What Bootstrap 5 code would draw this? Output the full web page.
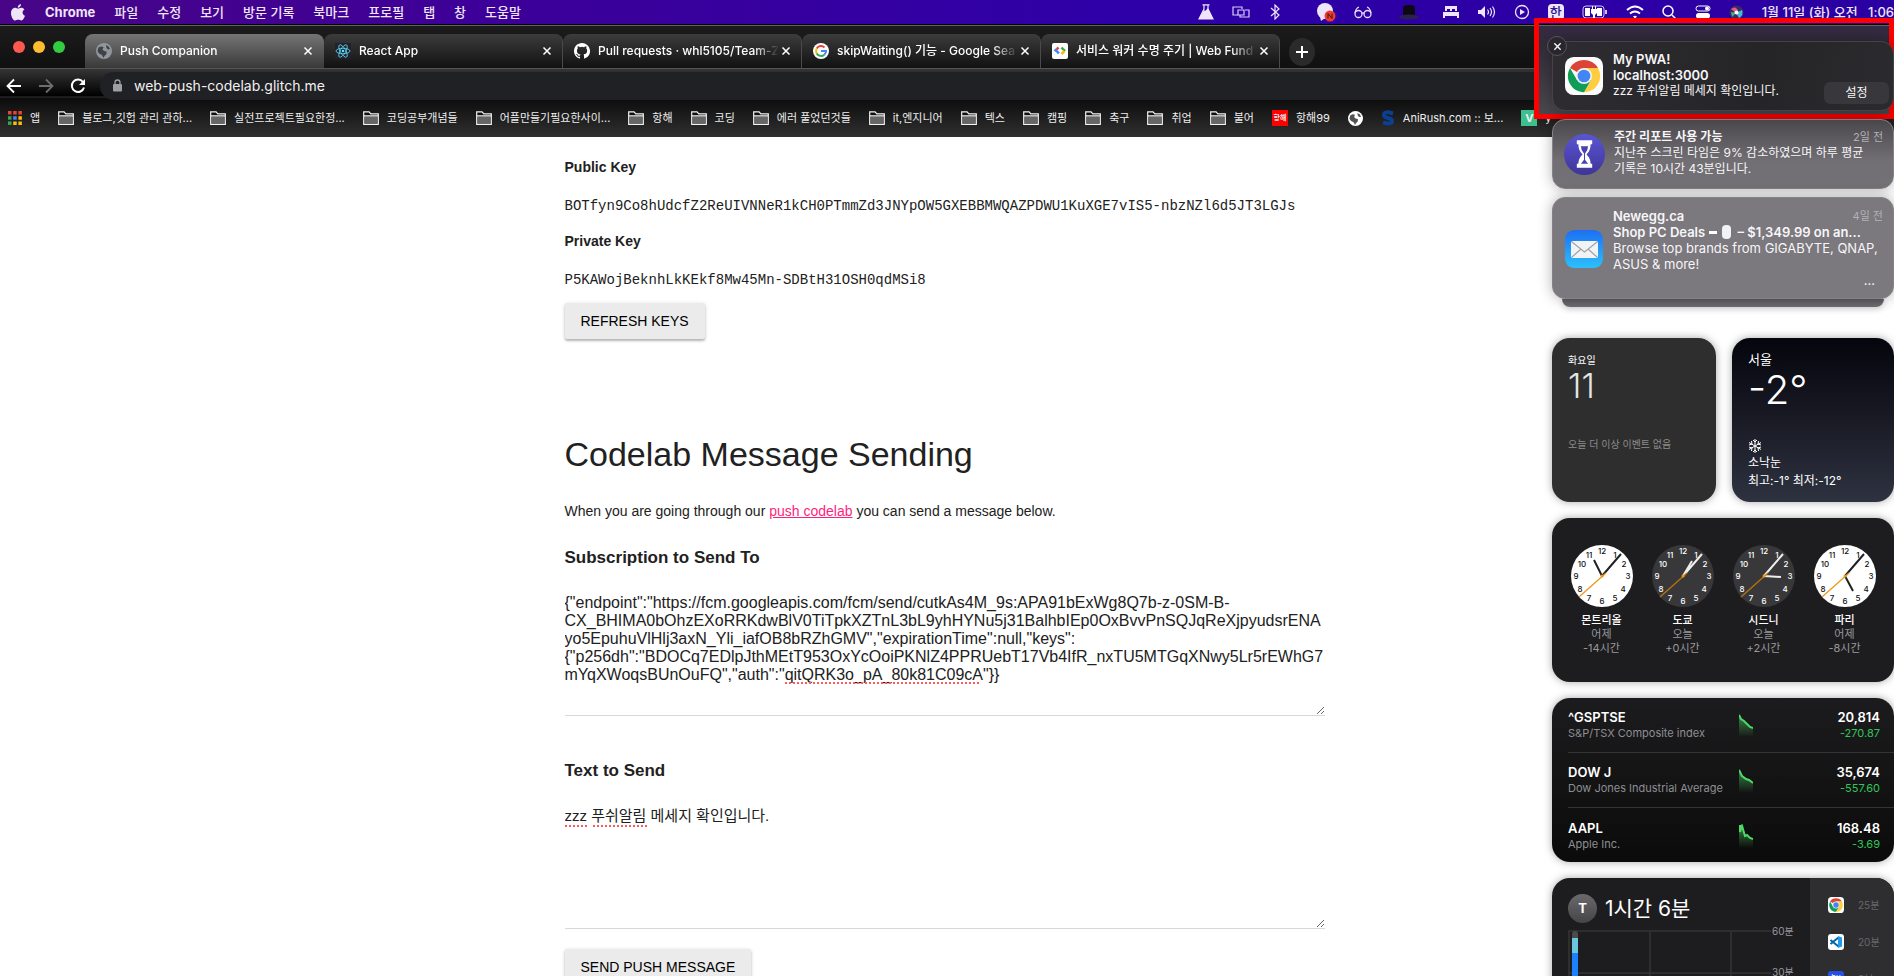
<!DOCTYPE html>
<html lang="ko">
<head>
<meta charset="utf-8">
<meta name="viewport" content="width=device-width, initial-scale=1">
<title>Push Companion</title>
<link rel="stylesheet" href="https://cdn.jsdelivr.net/npm/bootstrap@5.3.0/dist/css/bootstrap.min.css">
<style>
  body { font-family: Inter, "Noto Sans CJK KR", sans-serif; font-size: 13px; line-height: 16px; background: #fff; color: #212121; }
  .desktop { height: 100vh; }
  svg { flex: none; display: block; }
  button { font: inherit; color: inherit; }
  .plain-btn { border: 0; background: none; padding: 0; }
  .cut { overflow: hidden; white-space: nowrap; }

  /* system menu bar */
  .menubar { height: 25px; background: linear-gradient(90deg, #480587, #3d0098 25%, #2e00a8 60%, #2b00a2); border-bottom: 1px solid #000; color: #eee6f8; }
  .menubar a { color: inherit; text-decoration: none; }
  .menus { gap: 19px; padding-left: 10px; font-weight: 500; }
  .status { gap: 18px; font-weight: 500; }
  .input-lang { width: 16px; background: #eee6f8; color: #2e1494; }

  /* browser window */
  .tabstrip { height: 43px; background: linear-gradient(#1c1c1c, #101010); border-top: 1px solid #616161; color: #fff; }
  .lights { width: 85px; gap: 8px; padding-left: 13px; }
  .dot { width: 12px; height: 12px; border-radius: 50%; }
  .tab-item { width: 239px; height: 34px; padding: 0 10px 0 11px; gap: 8px; font-size: 12px; font-weight: 500; border-radius: 8px 8px 0 0; background: linear-gradient(#3c3c3c, #111); border-right: 1px solid #4a4a4a; }
  .tab-item.current { background: linear-gradient(#757575, #393939); border-right-color: transparent; }
  .tab-item .cut { margin-right: -6px; -webkit-mask-image: linear-gradient(90deg, #000 86%, transparent); mask-image: linear-gradient(90deg, #000 86%, transparent); }
  .plus { width: 26px; height: 28px; border-radius: 50%; background: #2a2a2a; margin-left: 9px; margin-bottom: 2px; }
  .chrome-bars { background: linear-gradient(#353535, #000 27px, #333 28px, #0c0c0c 29px, #303030); border-top: 1px solid #555; color: #fff; }
  .toolbar { height: 34px; padding: 0 0 1px 6px; gap: 16px; }
  .omnibox { height: 28px; border-radius: 14px; background: #202124; padding-left: 12px; gap: 11px; margin-left: -2px; }
  .omnibox input { background: none; border: 0; outline: 0; color: #f1f1f1; font-size: 14px; padding: 0; }
  .bookmarks { height: 34px; padding: 0 0 4px 8px; gap: 18px; font-size: 11px; }
  .bookmarks a { display: flex; align-items: center; gap: 8px; color: #eee; text-decoration: none; white-space: nowrap; flex: none; }
  .fav-red { width: 16px; height: 16px; background: #f00; font-size: 7px; line-height: 16px; text-align: center; font-weight: 700; }
  .fav-v { width: 16px; height: 16px; background: #3dc08d; text-align: center; font-weight: 700; }

  /* web page */
  .site { font-family: "Liberation Sans", "Noto Sans CJK KR", sans-serif; font-size: 14px; line-height: 24px; padding: 18px 5px 0 0; }
  .column { max-width: 760px; }
  .site h3 { font-size: 14px; line-height: 24px; font-weight: 700; margin: 0 0 15px; }
  .site code { display: block; color: #212121; font-family: "Liberation Mono", monospace; font-size: 14px; margin-bottom: 11px; }
  .site h4 { font-size: 34px; line-height: 40px; font-weight: 400; margin: 95px 0 25px; }
  .site p { margin: 0 0 23px; }
  .site p a { color: #ff1f7d; }
  .field-label { display: block; font-size: 17px; font-weight: 700; margin-bottom: 20px; }
  .field-box { margin-bottom: 43px; }
  .field { display: block; width: 100%; height: 126px; font-size: 16px; line-height: 18px; color: #212121; border: 0; border-bottom: 1px solid #d8d8d8; padding: 4px 0; outline: 0; overflow: hidden; word-break: break-all; }
  #message { font-size: 15px; }
  .raised { display: block; height: 36px; padding: 0 16px; border: 0; border-radius: 2px; background: #ebebeb; color: #000; box-shadow: 0 2px 2px rgba(0,0,0,.2), 0 1px 4px rgba(0,0,0,.16); }
  .send { margin-top: 20px; }
  .misspelt { position: absolute; height: 2px; background: repeating-linear-gradient(90deg, #ff5a5a 0 2px, transparent 2px 4px); }

  /* notification centre */
  .centre { position: absolute; top: 41px; right: 0; width: 342px; color: #fff; }
  .note { border-radius: 13px; border: 1px solid #858388; background: #7b787e; padding: 9px 10px 9px 12px; gap: 10px; color: #f7f6f8; box-shadow: 0 0 14px rgba(0,0,0,.3); margin-bottom: 8px; }
  .note b { font-weight: 600; }
  .ko { font-size: 12px; }
  .note-top { background: linear-gradient(100deg, #2e2c31, #252527 60%, #2b2a2e); border-color: #454349; height: 70px; position: relative; padding-right: 4px; }
  .note-mid { background: linear-gradient(#4a474d, #716e74 60%, #737076); height: 70px; padding-left: 11px; gap: 9px; }
  .note-last { height: 102px; padding-top: 10px; position: relative; margin-bottom: 0; }
  .when { color: #b4b2b7; font-size: 11px; }
  .stack { height: 8px; margin: 0 10px 31px; border-radius: 0 0 12px 12px; background: linear-gradient(#5f5d62, #706e73); box-shadow: 0 2px 6px rgba(0,0,0,.2); }
  .settings { border: 0; border-radius: 6px; background: #38373b; height: 22px; width: 65px; font-size: 12px; align-self: flex-end; margin-bottom: -3px; }
  .close-note { position: absolute; left: -6px; top: -6px; width: 20px; height: 20px; border-radius: 50%; background: #29272d; border: 1px solid #57545c; display: grid; place-items: center; }
  .widget { border-radius: 18px; background: #1d1d1f; box-shadow: 0 0 8px rgba(0,0,0,.35); height: 164px; margin-bottom: 16px; overflow: hidden; }
  .pair { gap: 16px; }
  .day { background: #2e2e2e; padding: 14px 16px; font-size: 10px; width: 164px; }
  .day-num { font-size: 34px; line-height: 36px; font-weight: 300; color: #e4e4e4; margin-bottom: 32px; }
  .muted { color: #8c8c8c; }
  .weather { background: linear-gradient(#05050d, #171822 45%, #2e3240); padding: 12px 16px; font-size: 12px; line-height: 18px; }
  .city { font-size: 13px; }
  .temp { font-size: 40px; line-height: 44px; font-weight: 300; margin-bottom: 26px; }
  .clocks { padding: 27px 9px; font-size: 11px; line-height: 14px; color: #98989d; }
  .clocks b { font-weight: 500; color: #fff; }
  .clocks svg { margin-bottom: 6px; }
  .face { font-size: 8px; font-weight: 500; text-anchor: middle; }
  .stocks { background: linear-gradient(#1c1c1e, #0b0b0b); padding-left: 16px; display: flex; flex-direction: column; }
  .stocks table { width: 100%; height: 100%; font-size: 11px; line-height: 15px; table-layout: fixed; }
  .stocks td { padding: 2px 0 0; border-bottom: 1px solid #343436; color: #8e8e93; white-space: nowrap; }
  .stocks td:first-child { width: 171px; }
  .stocks td:last-child { padding-right: 14px; text-align: right; color: #32c559; }
  .stocks tr:last-child td { border: 0; }
  .stocks b { font-size: 13px; font-weight: 600; color: #fff; }
  .usage-main { padding: 16px 0 0 16px; }
  .initial { width: 29px; height: 29px; border-radius: 50%; background: linear-gradient(#6a6a6c, #454547); font-weight: 700; line-height: 29px; text-align: center; }
  .total { font-size: 21px; line-height: 29px; }
  .usage-side { width: 84px; background: #2e2e30; padding: 19px 0 0 18px; gap: 21px; color: #68686b; font-size: 10px; }
  .usage-side div { gap: 14px; }
  .axis { fill: #98989d; font-size: 10px; }

  .highlight { position: absolute; top: 18px; right: 0; width: 360px; height: 101px; border: 5px solid #f00; background: linear-gradient(transparent 3px, #352a45 3px, #302b38 20px, #4a484e); }
</style>
</head>
<body>
<svg width="0" height="0" class="position-absolute" aria-hidden="true">
  <defs>
    <symbol id="folder" viewBox="0 0 16 14"><path d="M.7 13.3V.9h5.4l1.7 2h7.5v10.4z" fill="#111"/><path d="M1.5 5.500h13v7h-13z" fill="#666"/><path d="M.7 13.3V.9h5.4l1.7 2h7.5v10.4zM1 4.9h14" fill="none" stroke="#f4f4f4" stroke-width="1.2"/></symbol>
    <symbol id="globe" viewBox="0 0 16 16"><circle cx="8" cy="8" r="8" fill="currentColor"/><path d="M2.500 4.500 5 3.500l2.500.5-1 2.500L8 8l2.500.5v2.500L8.500 13l-1 2-1.500-3-3-1.500L1.500 8zM10 2l2.500 1.500L14 6l-2 .5L10.500 5z" fill="#333" opacity=".85"/></symbol>
    <symbol id="ex" viewBox="0 0 10 10"><path d="m1.500 1.500 7 7m0-7-7 7" stroke="currentColor" stroke-width="1.500"/></symbol>
    <symbol id="chrome" viewBox="0 0 40 40"><rect width="40" height="40" rx="9" fill="#fbfbfb"/><path d="M20 20 5.300 11.500A17 17 0 0 1 34.700 11.500L20 11.500z" fill="#db4437"/><path d="M34.700 11.500A17 17 0 0 1 20 37L27.400 24.300 20 11.500z" fill="#ffcd40"/><path d="M5.300 11.500A17 17 0 0 0 20 37L27.400 24.300 12.600 24.300z" fill="#0f9d58"/><circle cx="20" cy="20" r="8.500" fill="#f1f1f1"/><circle cx="20" cy="20" r="6.700" fill="#4285f4"/></symbol>
    <symbol id="ticks" viewBox="0 0 62 62"><circle cx="31" cy="31" r="31" fill="var(--dial)"/><g class="face" fill="currentColor"><text x="44" y="13">1</text><text x="53" y="22">2</text><text x="57" y="34">3</text><text x="52" y="47">4</text><text x="44" y="56">5</text><text x="31" y="59">6</text><text x="18" y="56">7</text><text x="9" y="47">8</text><text x="5" y="34">9</text><text x="11" y="22">10</text><text x="18" y="13">11</text><text x="31" y="9">12</text></g></symbol>
    <linearGradient id="fade" x2="0" y2="1"><stop stop-color="#4cd964" stop-opacity=".6"/><stop offset="1" stop-color="#4cd964" stop-opacity="0"/></linearGradient>
    <linearGradient id="mailbg" x2="0" y2="1"><stop stop-color="#1d6ff2"/><stop offset="1" stop-color="#2dc0fb"/></linearGradient>
    <linearGradient id="timebg" x2="0" y2="1"><stop stop-color="#5a55d6"/><stop offset="1" stop-color="#3f3596"/></linearGradient>
  </defs>
</svg>

<div class="desktop position-relative overflow-hidden">
  <header class="menubar d-flex align-items-center justify-content-between">
    <nav class="menus d-flex align-items-center" aria-label="메뉴">
      <svg width="16" height="17" viewBox="0 0 16 17" fill="#eee6f8"><path d="M11 0c.2 1.900-1.400 3.700-3.200 3.700C7.500 2 9.200.2 11 0zM8 4.600c.8 0 1.700-.9 3.300-.9 1.200 0 2.400.6 3.100 1.700-2.700 1.600-2.300 5.200.6 6.400-.6 1.900-2 4.700-3.600 4.700-1.200 0-1.600-.7-3.100-.7s-2 .7-3.100.7C3.200 16.500 1 12.700 1 9.200c0-3.300 2-5.400 4.200-5.400 1.300 0 2.100.8 2.800.8z"/></svg>
      <a href="#"><b>Chrome</b></a><a href="#">파일</a><a href="#">수정</a><a href="#">보기</a><a href="#">방문 기록</a><a href="#">북마크</a><a href="#">프로필</a><a href="#">탭</a><a href="#">창</a><a href="#">도움말</a>
    </nav>
    <div class="status d-flex align-items-center text-nowrap">
      <svg width="16" height="16" viewBox="0 0 16 16"><path d="M4.500.800h7M6 1v4L1 15h14L10 5V1" fill="none" stroke="#eee6f8" stroke-width="1.200"/><path d="m6 6 1 1 3-3 5 11H1z" fill="#eee6f8"/></svg>
      <svg width="18" height="14" viewBox="0 0 18 14" fill="none" stroke="#d9cdf5" stroke-width="1.200"><path d="M10 4V2H1v8h5M13 5h4v7H8v-2"/><path d="M6 5h6v5H6z"/></svg>
      <svg class="me-3" width="14" height="16" viewBox="0 0 14 16" fill="none" stroke="#eee6f8" stroke-width="1.200"><path d="m3 4 8 7-4 4V1l4 4-8 7"/></svg>
      <svg width="20" height="19" viewBox="0 0 20 19"><circle cx="9" cy="8" r="8" fill="#eee6f8"/><path d="m4 14 1 4 4-3" fill="#eee6f8"/><circle cx="14" cy="13" r="5.500" fill="#ee3d2d"/><path d="M12 15.500v-5l4 5v-5" fill="none" stroke="#41101b"/></svg>
      <svg class="me-2" width="18" height="14" viewBox="0 0 18 14" fill="none" stroke="#e6dcf8" stroke-width="1.300"><circle cx="4.500" cy="9" r="3.500"/><circle cx="13.500" cy="9" r="3.500"/><path d="M1 8q1-5 4-6M17 8q-1-5-4-6M8 8.500q1-1 2 0"/></svg>
      <svg class="me-1" width="22" height="16" viewBox="0 0 22 16"><path d="M5 12V4q0-3 6-3t6 3v8z" fill="#0d0910"/><ellipse cx="11" cy="13" rx="10" ry="2.500" fill="#2a2150"/></svg>
      <svg width="18" height="14" viewBox="0 0 18 14" fill="#eee6f8"><path d="M3 1h12v5h-2V4h-3v2H8V4H5v2H3zM1 7h16v6h-2v-2H3v2H1z"/></svg>
      <svg width="18" height="14" viewBox="0 0 18 14"><path d="M0 5h3l4-4v12L3 9H0z" fill="#eee6f8"/><path d="M9.500 4.500q2 2.500 0 5M12 3q3 4 0 8M14.500 1.500q4 5.500 0 11" fill="none" stroke="#eee6f8" stroke-width="1.200"/></svg>
      <svg width="16" height="16" viewBox="0 0 16 16"><circle cx="8" cy="8" r="6.500" fill="none" stroke="#eee6f8" stroke-width="1.300"/><path d="m6 5 5 3-5 3z" fill="#eee6f8"/></svg>
      <span class="input-lang rounded-1 text-center">한</span>
      <svg width="26" height="14" viewBox="0 0 26 14"><rect x="1" y="1" width="21" height="12" rx="3" fill="none" stroke="#cfc4ef"/><path d="M3 3h5v8H3zM15 3h5v8h-5zM10 1v3H9v4l2 2v3h2v-3l2-2V4h-1V1h-1v3h-2V1z" fill="#fff"/><path d="M24 5v4" stroke="#cfc4ef" stroke-width="2"/></svg>
      <svg width="18" height="14" viewBox="0 0 18 14" fill="none" stroke="#fff" stroke-width="2"><path d="M1 5q8-7 16 0M4 8.500q5-4 10 0"/><path d="m7 11.500 2 2 2-2q-2-1.500-4 0z" fill="#fff" stroke="none"/></svg>
      <svg width="15" height="15" viewBox="0 0 15 15" fill="none" stroke="#fff" stroke-width="1.500"><circle cx="6" cy="6" r="5"/><path d="m10 10 4.500 4.500"/></svg>
      <svg width="16" height="14" viewBox="0 0 16 14"><rect x="1" y="1" width="14" height="5" rx="2.500" fill="none" stroke="#fff"/><rect x="1" y="8" width="14" height="5.500" rx="2.700" fill="#fff"/><circle cx="12" cy="3.500" r="2" fill="#fff"/></svg>
      <svg width="15" height="15" viewBox="0 0 15 15"><circle cx="7.500" cy="7.500" r="7" fill="#3b2a63"/><path d="M2 4q5-4 7 2l-2 2z" fill="#e05a8a"/><path d="m7 8 6-3q2 5-3 8z" fill="#45b7e0"/><path d="m7 8-4 4-1-5z" fill="#43b58a"/><circle cx="7.500" cy="7.500" r="2" fill="#fff"/></svg>
      <span>1월 11일 (화) 오전&nbsp;&nbsp; 1:06</span>
    </div>
  </header>

  <div class="tabstrip d-flex align-items-end">
    <div class="lights d-flex align-items-center align-self-stretch">
      <span class="dot" style="background:#fe5850"></span><span class="dot" style="background:#febc2e"></span><span class="dot" style="background:#32cd41"></span>
    </div>
    <div class="tab-item current d-flex align-items-center"><svg width="16" height="16" color="#8f969e"><use href="#globe"/></svg><span class="cut flex-grow-1">Push Companion</span><button class="plain-btn" aria-label="닫기"><svg width="10" height="10"><use href="#ex"/></svg></button></div>
    <div class="tab-item d-flex align-items-center"><svg width="16" height="16" viewBox="0 0 16 16"><rect width="16" height="16" fill="#20232a"/><g fill="none" stroke="#61dafb" stroke-width=".8"><ellipse cx="8" cy="8" rx="7" ry="2.700"/><ellipse cx="8" cy="8" rx="7" ry="2.700" transform="rotate(60 8 8)"/><ellipse cx="8" cy="8" rx="7" ry="2.700" transform="rotate(120 8 8)"/></g><circle cx="8" cy="8" r="1.300" fill="#61dafb"/></svg><span class="cut flex-grow-1">React App</span><button class="plain-btn" aria-label="닫기"><svg width="10" height="10"><use href="#ex"/></svg></button></div>
    <div class="tab-item d-flex align-items-center"><svg width="16" height="16" viewBox="0 0 16 16" fill="#fff"><path d="M8 0C3.580 0 0 3.580 0 8c0 3.540 2.290 6.530 5.470 7.590.4.070.55-.17.55-.38v-1.490c-2.010.37-2.530-.49-2.690-.94-.09-.23-.48-.94-.82-1.130-.28-.15-.68-.52-.01-.53.63-.01 1.080.58 1.230.82.72 1.210 1.870.87 2.330.66.07-.52.28-.87.51-1.070-1.780-.2-3.640-.89-3.640-3.950 0-.87.31-1.590.82-2.150-.08-.2-.36-1.020.08-2.120 0 0 .67-.21 2.200.82a7.400 7.400 0 0 1 4 0c1.530-1.040 2.200-.82 2.200-.82.44 1.100.16 1.920.08 2.120.51.56.82 1.270.82 2.150 0 3.070-1.870 3.750-3.650 3.950.29.25.54.73.54 1.480v2.200c0 .21.15.46.55.38A8 8 0 0 0 8 0z"/></svg><span class="cut flex-grow-1">Pull requests · whl5105/Team-Z</span><button class="plain-btn" aria-label="닫기"><svg width="10" height="10"><use href="#ex"/></svg></button></div>
    <div class="tab-item d-flex align-items-center"><svg width="16" height="16" viewBox="0 0 16 16"><circle cx="8" cy="8" r="8" fill="#fff"/><g fill="none" stroke-width="2"><path d="M11.500 4.500A5 5 0 0 0 3.700 5.500" stroke="#ea4335"/><path d="M3.700 5.500a5 5 0 0 0 0 5" stroke="#fbbc05"/><path d="M3.700 10.500a5 5 0 0 0 7.600 1.200" stroke="#34a853"/><path d="M11.300 11.700A5 5 0 0 0 13 8H8" stroke="#4285f4"/></g></svg><span class="cut flex-grow-1">skipWaiting() 기능 - Google Sea</span><button class="plain-btn" aria-label="닫기"><svg width="10" height="10"><use href="#ex"/></svg></button></div>
    <div class="tab-item d-flex align-items-center"><svg width="16" height="16" viewBox="0 0 16 16" fill="none" stroke-width="2.500"><rect width="16" height="16" rx="2" fill="#fff"/><path d="M6.500 4.500 4.700 6.300" stroke="#ea4335"/><path d="M2.500 8.200 3.800 7l3 3.500" stroke="#4285f4"/><path d="m9.500 4.500 3.500 3.700" stroke="#34a853"/><path d="m12.500 8-3 3" stroke="#fbbc05"/></svg><span class="cut flex-grow-1">서비스 워커 수명 주기 | Web Fund</span><button class="plain-btn" aria-label="닫기"><svg width="10" height="10"><use href="#ex"/></svg></button></div>
    <button class="plain-btn plus d-grid align-items-center justify-content-center" aria-label="새 탭"><svg width="12" height="12" viewBox="0 0 12 12" stroke="#fff" stroke-width="2"><path d="M6 0v12M0 6h12"/></svg></button>
  </div>

  <div class="chrome-bars">
    <div class="toolbar d-flex align-items-center">
      <button class="plain-btn" aria-label="뒤로"><svg width="16" height="16" viewBox="0 0 16 16" fill="none" stroke="#fff" stroke-width="1.800"><path d="M15 8H2m6-6.500L1.500 8 8 14.500"/></svg></button>
      <button class="plain-btn" aria-label="앞으로"><svg width="16" height="16" viewBox="0 0 16 16" fill="none" stroke="#6d6d6d" stroke-width="1.800"><path d="M1 8h13M8 1.500 14.500 8 8 14.500"/></svg></button>
      <button class="plain-btn" aria-label="새로고침"><svg width="16" height="16" viewBox="0 0 16 16"><path d="M13 4a6.200 6.200 0 1 0 1 5.500" fill="none" stroke="#fff" stroke-width="2"/><path d="M15 1v6H9z" fill="#fff"/></svg></button>
      <div class="omnibox d-flex align-items-center flex-grow-1"><svg width="11" height="13" viewBox="0 0 11 13"><rect x="1" y="5" width="9" height="7.500" rx="1" fill="#9aa0a6"/><path d="M3 5V3.500a2.500 2.500 0 0 1 5 0V5" fill="none" stroke="#9aa0a6" stroke-width="1.300"/></svg><input class="flex-grow-1" type="text" aria-label="주소" value="web-push-codelab.glitch.me"></div>
    </div>
    <nav class="bookmarks d-flex align-items-center overflow-hidden" aria-label="북마크">
      <a href="#"><svg width="14" height="14" viewBox="0 0 14 14"><path d="M0 0h3.500v3.500H0zM5.200 0h3.500v3.500H5.200zM10.400 0h3.500v3.500h-3.500z" fill="#ea4335"/><path d="M0 5.200h3.500v3.500H0z" fill="#34a853"/><path d="M5.200 5.200h3.500v3.500H5.200z" fill="#4285f4"/><path d="M10.400 5.200h3.500v3.500h-3.500zM5.200 10.400h3.500v3.500H5.200zM10.400 10.400h3.500v3.500h-3.500z" fill="#fbbc05"/><path d="M0 10.400h3.500v3.500H0z" fill="#34a853"/></svg>앱</a>
      <a href="#"><svg width="16" height="14"><use href="#folder"/></svg>블로그,깃헙 관리 관하...</a>
      <a href="#"><svg width="16" height="14"><use href="#folder"/></svg>실전프로젝트필요한정...</a>
      <a href="#"><svg width="16" height="14"><use href="#folder"/></svg>코딩공부개념들</a>
      <a href="#"><svg width="16" height="14"><use href="#folder"/></svg>어플만들기필요한사이...</a>
      <a href="#"><svg width="16" height="14"><use href="#folder"/></svg>항해</a>
      <a href="#"><svg width="16" height="14"><use href="#folder"/></svg>코딩</a>
      <a href="#"><svg width="16" height="14"><use href="#folder"/></svg>에러 풀었던것들</a>
      <a href="#"><svg width="16" height="14"><use href="#folder"/></svg>it,엔지니어</a>
      <a href="#"><svg width="16" height="14"><use href="#folder"/></svg>텍스</a>
      <a href="#"><svg width="16" height="14"><use href="#folder"/></svg>캠핑</a>
      <a href="#"><svg width="16" height="14"><use href="#folder"/></svg>축구</a>
      <a href="#"><svg width="16" height="14"><use href="#folder"/></svg>취업</a>
      <a href="#"><svg width="16" height="14"><use href="#folder"/></svg>불어</a>
      <a href="#"><span class="fav-red">항해</span>항해99</a>
      <a href="#" aria-label="사이트"><svg width="15" height="15" color="#fff"><use href="#globe"/></svg></a>
      <a href="#"><svg width="14" height="16" viewBox="0 0 14 16" fill="none" stroke="#0b3f91" stroke-width="4"><path d="M12 3.500Q3 .5 3 5q0 2 4 3t4 3q0 4-9 1.500"/></svg>AniRush.com :: 보...</a>
      <a href="#"><span class="fav-v">V</span>y</a>
    </nav>
  </div>

  <main class="site">
    <div class="column mx-auto">
      <h3>Public Key</h3>
      <code>BOTfyn9Co8hUdcfZ2ReUIVNNeR1kCH0PTmmZd3JNYpOW5GXEBBMWQAZPDWU1KuXGE7vIS5-nbzNZl6d5JT3LGJs</code>
      <h3>Private Key</h3>
      <code>P5KAWojBeknhLkKEkf8Mw45Mn-SDBtH31OSH0qdMSi8</code>
      <button class="raised">REFRESH KEYS</button>
      <h4>Codelab Message Sending</h4>
      <p>When you are going through our <a href="#">push codelab</a> you can send a message below.</p>
      <label class="field-label" for="subscription">Subscription to Send To</label>
      <div class="field-box position-relative">
        <textarea class="field" id="subscription" spellcheck="false">{"endpoint":"https://fcm.googleapis.com/fcm/send/cutkAs4M_9s:APA91bExWg8Q7b-z-0SM-B-
CX_BHIMA0bOhzEXoRRKdwBlV0TiTpkXZTnL3bL9yhHYNu5j31BalhbIEp0OxBvvPnSQJqReXjpyudsrENA
yo5EpuhuVlHlj3axN_Yli_iafOB8bRZhGMV","expirationTime":null,"keys":
{"p256dh":"BDOCq7EDlpJthMEtT953OxYcOoiPKNlZ4PPRUebT17Vb4IfR_nxTU5MTGqXNwy5Lr5rEWhG7
mYqXWoqsBUnOuFQ","auth":"qitQRK3o_pA_80k81C09cA"}}</textarea>
        <span class="misspelt" style="left:220px;top:92px;width:196px"></span>
      </div>
      <label class="field-label" for="message">Text to Send</label>
      <div class="position-relative">
        <textarea class="field" id="message" spellcheck="false">zzz 푸쉬알림 메세지 확인입니다.</textarea>
        <span class="misspelt" style="left:0;top:22px;width:24px"></span><span class="misspelt" style="left:28px;top:22px;width:54px"></span>
      </div>
      <button class="raised send">SEND PUSH MESSAGE</button>
    </div>
  </main>

  <div class="highlight"></div>

  <aside class="centre">
    <article class="note note-top d-flex">
      <button class="close-note p-0" aria-label="닫기"><svg width="9" height="9"><use href="#ex"/></svg></button>
      <svg class="align-self-center" width="38" height="38"><use href="#chrome"/></svg>
      <div class="flex-grow-1 text-nowrap"><b>My PWA!<br>localhost:3000</b><div class="ko">zzz 푸쉬알림 메세지 확인입니다.</div></div>
      <button class="settings">설정</button>
    </article>
    <article class="note note-mid d-flex">
      <svg class="align-self-center" width="41" height="41" viewBox="0 0 40 40"><circle cx="20" cy="20" r="20" fill="url(#timebg)"/><path d="M12.500 6h15v4h-1.500q0 6-4 10 4 4 4 9h1.500v4h-15v-4H14q0-5 4-9-4-4-4-10h-1.500z" fill="#fff"/><path d="M16.500 12q0 4 3 7v6l-3 4h7l-3-4v-6q3-3 3-7z" fill="#4a43ad"/></svg>
      <div class="ko flex-grow-1 text-nowrap"><div class="d-flex justify-content-between"><b>주간 리포트 사용 가능</b><span class="when">2일 전</span></div>지난주 스크린 타임은 9% 감소하였으며 하루 평균<br>기록은 10시간 43분입니다.</div>
    </article>
    <article class="note note-last d-flex">
      <svg class="align-self-center" width="38" height="38" viewBox="0 0 38 38"><rect width="38" height="38" rx="9" fill="url(#mailbg)"/><rect x="6" y="11" width="27" height="17" rx="2" fill="#f2f3f4"/><path d="m7 12 12.500 10L32 12M7 27l9-8M32 27l-9-8" fill="none" stroke="#9da4aa" stroke-width="1.200"/></svg>
      <div class="flex-grow-1 text-nowrap"><div class="d-flex justify-content-between"><b>Newegg.ca</b><span class="when">4일 전</span></div><b class="d-flex align-items-center">Shop PC Deals&nbsp;<svg width="29" height="14" viewBox="0 0 29 14"><path d="M1 6h8v3H1z" fill="#fff"/><rect x="14" y="0" width="9" height="14" rx="4" fill="#f1f2f6"/></svg>– $1,349.99 on an...</b>Browse top brands from GIGABYTE, QNAP,<br>ASUS &amp; more!<div class="text-end pe-2">...</div></div>
    </article>
    <div class="stack"></div>

    <div class="pair d-flex">
      <section class="widget day"><div>화요일</div><div class="day-num">11</div><div class="muted">오늘 더 이상 이벤트 없음</div></section>
      <section class="widget weather flex-grow-1"><div class="city">서울</div><div class="temp">-2°</div><svg width="14" height="16" viewBox="0 0 14 16" fill="none" stroke="#fff" stroke-width="1"><path d="M7 1v14M1 4.500l12 7M13 4.500l-12 7M5 2l2 2 2-2M5 14l2-2 2 2M1 7l3-1-.5-3M13 7l-3-1 .5-3M1 9l3 1-.5 3M13 9l-3 1 .5 3"/></svg><div>소낙눈</div><div class="text-nowrap">최고:-1° 최저:-12°</div></section>
    </div>

    <section class="widget clocks row row-cols-4 g-0 text-center">
      <div class="d-flex flex-column align-items-center"><svg width="62" height="62" viewBox="0 0 62 62" style="--dial:#fff;color:#111"><use href="#ticks"/><path d="m31 31-8-16M31 31 50 9" stroke="#222" stroke-width="2"/><path d="M35 28 8 52" stroke="#e99a1c" stroke-width="1.300"/><circle cx="31" cy="31" r="1.500" fill="#e99a1c"/></svg><b>몬트리올</b>어제<br>-14시간</div>
      <div class="d-flex flex-column align-items-center"><svg width="62" height="62" viewBox="0 0 62 62" style="--dial:#38383a;color:#fff"><use href="#ticks"/><path d="m31 31 9-15M31 31 50 9" stroke="#eee" stroke-width="2"/><path d="M35 28 8 52" stroke="#b8740a" stroke-width="1.300"/><circle cx="31" cy="31" r="1.500" fill="#e99a1c"/></svg><b>도쿄</b>오늘<br>+0시간</div>
      <div class="d-flex flex-column align-items-center"><svg width="62" height="62" viewBox="0 0 62 62" style="--dial:#38383a;color:#fff"><use href="#ticks"/><path d="m31 31 17 1M31 31 50 9" stroke="#eee" stroke-width="2"/><path d="M35 28 8 52" stroke="#b8740a" stroke-width="1.300"/><circle cx="31" cy="31" r="1.500" fill="#e99a1c"/></svg><b>시드니</b>오늘<br>+2시간</div>
      <div class="d-flex flex-column align-items-center"><svg width="62" height="62" viewBox="0 0 62 62" style="--dial:#fff;color:#111"><use href="#ticks"/><path d="m31 31 8 15M31 31 50 9" stroke="#222" stroke-width="2"/><path d="M35 28 8 52" stroke="#e99a1c" stroke-width="1.300"/><circle cx="31" cy="31" r="1.500" fill="#e99a1c"/></svg><b>파리</b>어제<br>-8시간</div>
    </section>

    <section class="widget stocks">
      <table>
        <tr><td><b>^GSPTSE</b><br>S&amp;P/TSX Composite index</td><td><svg width="14" height="24" viewBox="0 0 14 24"><path d="M0 0l2 4 3 3 3 3 3 3 3 1v9H0z" fill="url(#fade)"/><path d="m0 1 2 4 3 2 3 3 3 3 3 1" fill="none" stroke="#4cd964" stroke-width="2"/></svg></td><td><b>20,814</b><br>-270.87</td></tr>
        <tr><td><b>DOW J</b><br>Dow Jones Industrial Average</td><td><svg width="14" height="24" viewBox="0 0 14 24"><path d="M0 0l3 6 4 3 3 2 4 3v10H0z" fill="url(#fade)"/><path d="m0 1 3 6 4 3 3 1 4 3" fill="none" stroke="#4cd964" stroke-width="2"/></svg></td><td><b>35,674</b><br>-557.60</td></tr>
        <tr><td><b>AAPL</b><br>Apple Inc.</td><td><svg width="14" height="24" viewBox="0 0 14 24"><path d="M0 1h4l2 11 2 0 3 2 3 1v9H0z" fill="url(#fade)"/><path d="M1 1v7l2-6 3 10 2-1 3 3 3 1" fill="none" stroke="#4cd964" stroke-width="2"/></svg></td><td><b>168.48</b><br>-3.69</td></tr>
      </table>
    </section>

    <section class="widget d-flex">
      <div class="usage-main flex-grow-1">
        <div class="d-flex align-items-center gap-2"><span class="initial">T</span><span class="total">1시간 6분</span></div>
        <svg class="mt-1" width="232" height="115" viewBox="0 0 232 115"><path d="M0 4h203M0 46h203M1 4v111M82 4v111M163 4v111" stroke="#343436" stroke-width="1.500" fill="none"/><path d="M4 115V7q0-3 3-3t3 3v108z" fill="#4b4b4d"/><path d="M4 11h6v15H4z" fill="#6cc5de"/><path d="M4 26h6v89H4z" fill="#1a82ff"/><text class="axis" x="204" y="8">60분</text><text class="axis" x="204" y="49">30분</text></svg>
      </div>
      <div class="usage-side d-flex flex-column">
        <div class="d-flex align-items-center"><svg width="16" height="16"><use href="#chrome"/></svg>25분</div>
        <div class="d-flex align-items-center"><svg width="16" height="16" viewBox="0 0 16 16"><rect width="16" height="16" rx="3" fill="#fff"/><path d="m2.500 6 8 6.500M2.500 10l8-6.500" stroke="#0065a9" stroke-width="2"/><path d="m10 2 4 1.500v9L10 14z" fill="#1f9cf0"/></svg>20분</div>
        <div class="d-flex align-items-center"><svg width="16" height="16" viewBox="0 0 16 16"><rect width="16" height="16" rx="3" fill="#2550e8"/><text x="8" y="9" fill="#fff" font-size="8" text-anchor="middle">hu</text></svg>3분</div>
      </div>
    </section>
  </aside>
</div>
<script src="https://cdn.jsdelivr.net/npm/bootstrap@5.3.0/dist/js/bootstrap.bundle.min.js"></script>
</body>
</html>
